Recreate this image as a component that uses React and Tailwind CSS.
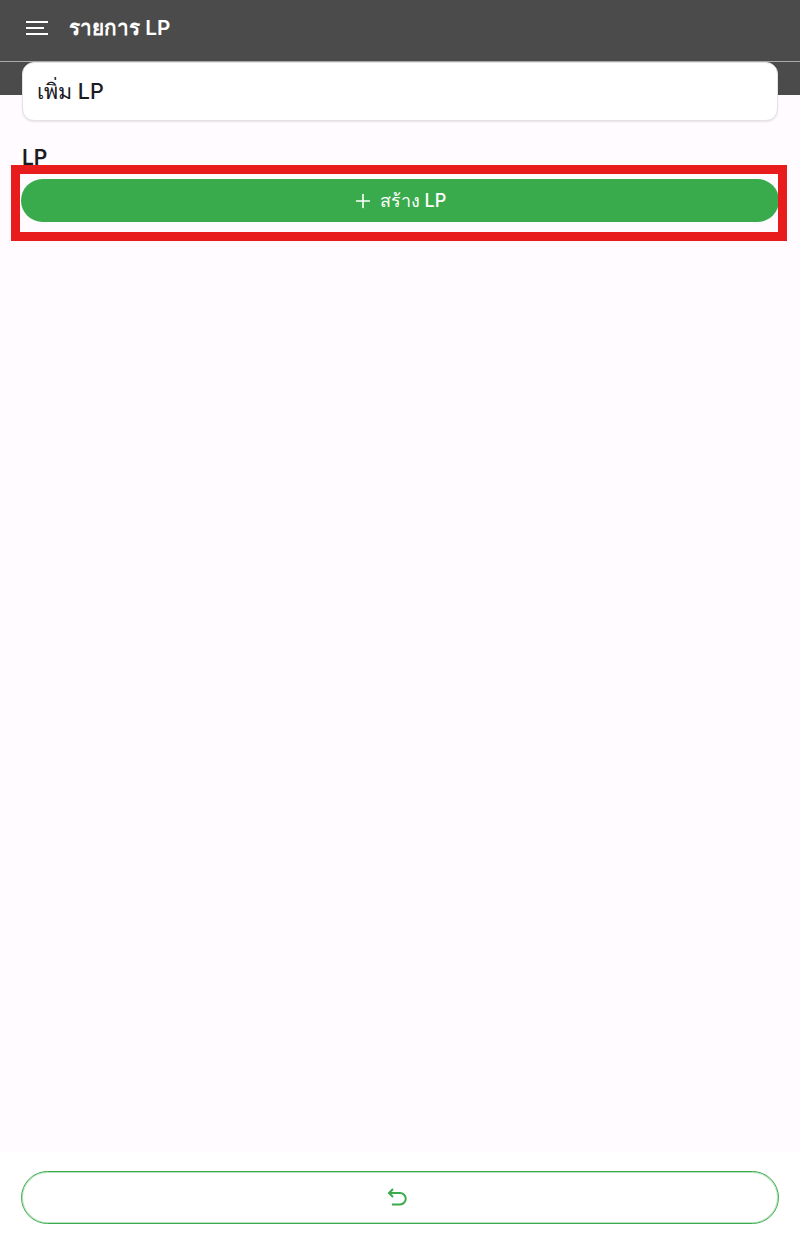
import { Plus } from 'lucide-react';

export default function App() {
    return (
        <div className="relative flex flex-col h-[1242px] bg-[#fffbff] font-['Inter','Noto_Sans',sans-serif] text-[#1c1b1f]">
            {/* Top bar */}
            <header className="h-[62px] shrink-0 flex items-center pl-[26px] pb-[5px] gap-[21px] bg-[#4b4b4b] border-b border-[#a8a8a8] text-white">
                <svg width="22" height="14" viewBox="0 0 22 14" fill="none" stroke="currentColor" strokeWidth="2">
                    <path d="M0 1h22M0 7h18M0 13h22" />
                </svg>
                <h1 className="text-[20.7px] font-semibold leading-none">รายการ LP</h1>
            </header>
            <div className="h-[33px] shrink-0 bg-[#4b4b4b]" />

            <main className="flex-1 px-[22px] -mt-[33px]">
                <div className="h-[59px] flex items-center px-[14px] bg-white border border-[#e4e2e6] rounded-xl shadow-[0_1px_2px_rgba(0,0,0,0.1)]">
                    <span className="text-[21.5px] font-medium">เพิ่ม LP</span>
                </div>

                <h2 className="mt-[24px] text-[21px] font-semibold leading-[26px]">LP</h2>
                <button className="-mx-px mt-[8px] w-[758px] h-[43px] pr-[2px] flex items-center justify-center gap-[6px] bg-[#3aab4c] rounded-full text-white">
                    <Plus size={22} strokeWidth={1.75} />
                    <span className="text-[18px] font-medium">สร้าง LP</span>
                </button>
            </main>

            {/* Bottom action */}
            <footer className="h-[90px] shrink-0 px-[21px] pt-[19px] bg-white">
                <button className="w-full h-[53px] pr-[7px] pb-[2px] flex items-center justify-center bg-white border border-[#3aab4c] rounded-full text-[#3aab4c] shadow-[inset_0_0_0_1px_rgba(58,171,76,0.35)]">
                    <svg width="20" height="18" viewBox="0 0 20 18" fill="none" stroke="currentColor" strokeWidth="2">
                        <path d="M6 1 2 5l4 4" />
                        <path d="M2 5h11a4.7 4.7 0 0 1 0 11.5H5" />
                    </svg>
                </button>
            </footer>

            {/* Highlight box */}
            <div className="absolute left-[11px] top-[165px] w-[776px] h-[76px] border-[9px] border-[#e81c1c] pointer-events-none" />
        </div>
    );
}
